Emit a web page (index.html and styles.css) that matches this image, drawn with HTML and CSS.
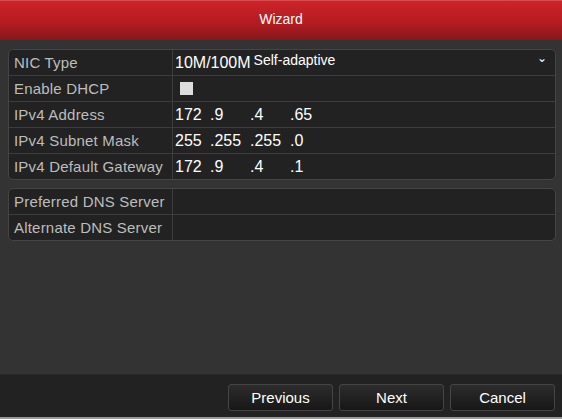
FILE: index.html
```html
<!DOCTYPE html>
<html lang="en">
<head>
    <meta charset="UTF-8">
    <title>Wizard</title>
    <link rel="stylesheet" href="styles.css">
</head>
<body>
    <div class="dialog">
        <div class="title">Wizard</div>

        <div class="content">
            <div class="group">
                <div class="row">
                    <div class="label">NIC Type</div>
                    <div class="value select">
                        <span>10M/100M</span><span class="small">Self-adaptive</span>
                        <span class="arrow">&#8964;</span>
                    </div>
                </div>
                <div class="row">
                    <div class="label">Enable DHCP</div>
                    <div class="value"><span class="check"></span></div>
                </div>
                <div class="row">
                    <div class="label">IPv4 Address</div>
                    <div class="value ip"><span>172</span><span>.9</span><span>.4</span><span>.65</span></div>
                </div>
                <div class="row">
                    <div class="label">IPv4 Subnet Mask</div>
                    <div class="value ip"><span>255</span><span>.255</span><span>.255</span><span>.0</span></div>
                </div>
                <div class="row">
                    <div class="label">IPv4 Default Gateway</div>
                    <div class="value ip"><span>172</span><span>.9</span><span>.4</span><span>.1</span></div>
                </div>
            </div>

            <div class="group">
                <div class="row">
                    <div class="label">Preferred DNS Server</div>
                    <div class="value"></div>
                </div>
                <div class="row">
                    <div class="label">Alternate DNS Server</div>
                    <div class="value"></div>
                </div>
            </div>
        </div>

        <div class="footer">
            <button class="btn">Previous</button>
            <button class="btn">Next</button>
            <button class="btn">Cancel</button>
        </div>
    </div>
</body>
</html>
```

FILE: styles.css
```css
body { margin: 0; background: #333; font-family: "Liberation Sans", Arial, sans-serif; }

.dialog { width: 562px; height: 419px; display: flex; flex-direction: column; background: #333; border-bottom: 2px solid #9a9a9a; box-sizing: border-box; }

.title {
    height: 40px; line-height: 37px;
    text-align: center; color: #fff; font-size: 14px;
    background: linear-gradient(#cd2429, #b31c21 55%, #86171a);
    border-top: 1px solid #d84a4e;
    box-sizing: border-box;
}

.content { flex: 1; padding: 9px 6px 0 8px; }

.group { border: 1px solid #454545; border-radius: 5px; background: #222; margin-bottom: 8px; overflow: hidden; }

.row { display: flex; height: 26px; border-bottom: 1px solid #3d3d3d; box-sizing: border-box; }
.row:last-child { border-bottom: none; height: 25px; }

.label { width: 164px; box-sizing: border-box; padding-left: 5px; line-height: 25px; font-size: 15px; letter-spacing: 0.2px; color: #bdbdbd; border-right: 1px solid #3d3d3d; }
.value { flex: 1; padding-left: 2px; line-height: 25px; font-size: 16px; color: #fff; display: flex; align-items: center; }

.select .small { font-size: 14px; margin-left: 3px; margin-top: -4px; }
.select .arrow { margin-left: auto; margin-right: 8px; font-size: 12px; margin-top: -8px; }

.check { width: 13px; height: 13px; background: #ddd; margin-left: 5px; }

.ip span { width: 40px; }
.ip span:first-child { width: 35px; }

.footer { height: 43px; background: #222; border-top: 1px solid #2a2a2a; display: flex; justify-content: flex-end; gap: 6px; padding: 9px 7px 0 0; box-sizing: border-box; }

.btn {
    width: 105px; height: 27px;
    border: 1px solid #454545; border-radius: 3px;
    background: linear-gradient(#2c2c2c, #171717);
    color: #fff; font-family: "Liberation Sans", Arial, sans-serif; font-size: 15px;
}
```
